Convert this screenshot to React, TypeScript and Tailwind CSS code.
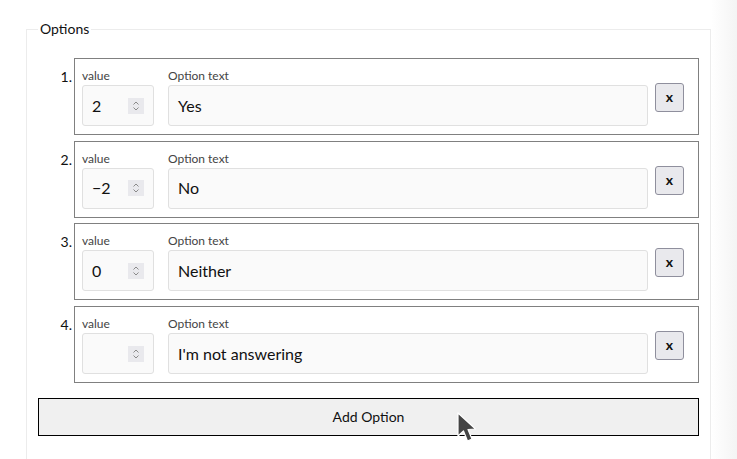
import React from "react";

const rows = [
  { n: 1, v: "2", t: "Yes" },
  { n: 2, v: "\u22122", t: "No" },
  { n: 3, v: "0", t: "Neither" },
  { n: 4, v: "", t: "I'm not answering" },
];

function Spinner() {
  return (
    <div className="w-[16px] h-[16px] bg-[#e9e9ed] flex items-center justify-center">
      <svg width="8" height="12" viewBox="0 0 8 12" fill="none" stroke="#8a8a8a" strokeWidth="1">
        <path d="M1.5 4.5 L4 2 L6.5 4.5" />
        <path d="M1.5 7.5 L4 10 L6.5 7.5" />
      </svg>
    </div>
  );
}

export default function App() {
  return (
    <div
      className="w-[737px] h-[459px] relative overflow-hidden bg-white flex"
      style={{ fontFamily: "Lato, 'Open Sans', sans-serif" }}
    >
      <div className="w-[26px] shrink-0" />
      <fieldset className="w-[685px] shrink-0 mt-[19px] border border-[#ececec] px-[11px] pb-[20px] h-[460px]">
        <legend className="px-[2px] text-[14px] leading-[20px] text-[#111]">Options</legend>
        <div className="flex flex-col gap-[5.7px] mt-[19px]">
          {rows.map((r) => (
            <div key={r.n} className="flex">
              <div className="w-[34px] mr-[2px] text-right text-[14px] leading-[20px] text-[#111] pt-[9px]">
                {r.n}.
              </div>
              <div className="flex-1 h-[77px] border border-[#808080] pl-[7px] pr-[14px] pt-[7px] flex">
                <div className="flex flex-col w-[72px]">
                  <div className="mt-[2px] text-[12px] leading-[16px] text-[#444] h-[16px]">value</div>
                  <div className="mt-[1px] h-[41px] rounded-[3px] border border-[#e0e0e0] bg-[#fafafa] flex items-center pl-[9px] pr-[9px]">
                    <span className="text-[16px] text-[#111] flex-1">{r.v}</span>
                    <Spinner />
                  </div>
                </div>
                <div className="flex flex-col flex-1 ml-[14px]">
                  <div className="mt-[2px] text-[12px] leading-[16px] text-[#444] h-[16px]">Option text</div>
                  <div className="mt-[1px] h-[41px] rounded-[3px] border border-[#e0e0e0] bg-[#fafafa] flex items-center pl-[9px]">
                    <span className="text-[16px] text-[#111]">{r.t}</span>
                  </div>
                </div>
                <div className="ml-[7px] mt-[17px]">
                  <button className="w-[29px] h-[29px] rounded-[3px] border border-[#8f8f9d] bg-[#e9e9ed] text-[14px] font-bold text-[#111] flex items-center justify-center leading-none pb-[1px]">
                    x
                  </button>
                </div>
              </div>
            </div>
          ))}
        </div>
        <button className="mt-[15px] w-full h-[38px] border border-black bg-[#f0f0f0] text-[14px] text-[#111] pb-[1px]">
          Add Option
        </button>
      </fieldset>
      <div className="flex-1 bg-gradient-to-r from-white to-[#f4f4f4]" />
      <svg
        className="absolute left-[457px] top-[412px]"
        width="24"
        height="36"
        viewBox="0 0 24 36"
      >
        <path
          d="M1 1 L1 24 L6.5 19 L10.5 29 L15 27 L11 17.5 L18.5 17 Z"
          fill="#444"
          stroke="#ffffff"
          strokeWidth="1.2"
          strokeLinejoin="round"
        />
      </svg>
    </div>
  );
}
